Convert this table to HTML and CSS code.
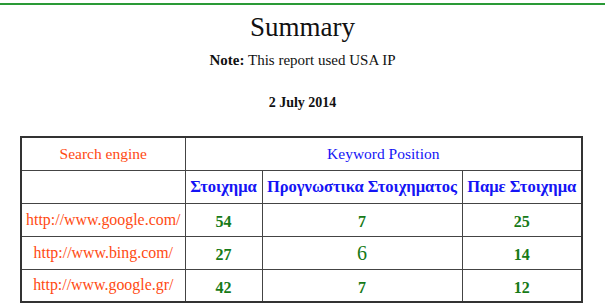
FILE: index.html
```html
<!DOCTYPE html>
<html>
<head>
<meta charset="utf-8">
<link rel="stylesheet" href="styles.css">
</head>
<body>
<div class="topline"></div>
<div class="page">
  <h1 class="title">Summary</h1>
  <p class="note"><b>Note:</b> This report used USA IP</p>
  <p class="date">2 July 2014</p>
  <table class="report">
    <colgroup>
      <col class="c1"><col class="c2"><col class="c3"><col class="c4">
    </colgroup>
    <tr>
      <th class="engine">Search engine</th>
      <th class="kp" colspan="3">Keyword Position</th>
    </tr>
    <tr>
      <td></td>
      <th class="kw">Στοιχημα</th>
      <th class="kw">Προγνωστικα Στοιχηματος</th>
      <th class="kw">Παμε Στοιχημα</th>
    </tr>
    <tr>
      <td class="url">http://www.google.com/</td>
      <td class="num">54</td><td class="num">7</td><td class="num">25</td>
    </tr>
    <tr>
      <td class="url">http://www.bing.com/</td>
      <td class="num">27</td><td class="num big">6</td><td class="num">14</td>
    </tr>
    <tr>
      <td class="url">http://www.google.gr/</td>
      <td class="num">42</td><td class="num">7</td><td class="num">12</td>
    </tr>
  </table>
</div>
</body>
</html>
```

FILE: styles.css
```css
html, body {
  margin: 0;
  padding: 0;
  background: #fff;
}
body {
  font-family: "Liberation Serif", "DejaVu Serif", serif;
  color: #111;
}
.topline {
  margin-top: 3px;
  height: 2px;
  background: #2a9a36;
}
.page {
  padding: 0 8px;
}
.title {
  margin: 7px 0 0;
  font-size: 27px;
  font-weight: normal;
  text-align: center;
  line-height: 30px;
}
.note {
  margin: 8px 0 0;
  font-size: 15px;
  text-align: center;
  line-height: 20px;
}
.date {
  margin: 23px 0 0;
  font-size: 14px;
  font-weight: bold;
  text-align: center;
  line-height: 20px;
}
.report {
  margin: 23px 0 0 12px;
  width: 561px;
  border-collapse: collapse;
  table-layout: fixed;
  border: 2px solid #333;
}
.c1 { width: 164px; }
.c2 { width: 77px; }
.c3 { width: 200px; }
.c4 { width: 120px; }
.report tr {
  height: 33px;
}
.report th, .report td {
  border: 1.5px solid #444;
  padding: 0;
  line-height: 20px;
  text-align: center;
  vertical-align: middle;
  font-size: 15px;
}
.engine {
  color: #ff4a12;
  font-weight: normal;
}
.report .engine, .report .kp {
  font-size: 15.5px;
}
.kp {
  color: #1414f5;
  font-weight: normal;
}
.report .kw {
  color: #1414f5;
  font-weight: bold;
  font-size: 16.5px;
  white-space: nowrap;
}
.report .url {
  color: #ff4a12;
  font-size: 15.9px;
}
.report .num {
  color: #177a17;
  font-weight: bold;
  font-size: 16px;
  padding-top: 5px;
}
.report .num.big {
  font-weight: normal;
  font-size: 20px;
  padding-top: 0;
}
```
